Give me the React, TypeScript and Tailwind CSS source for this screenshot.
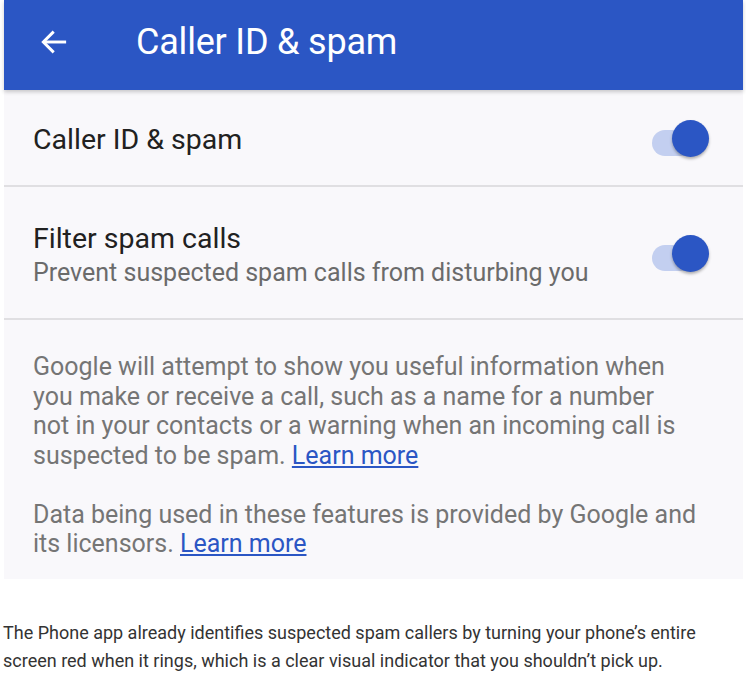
// App.tsx
const Toggle = () => (
  <div className="relative w-[60px] h-[40px] shrink-0">
    <div className="absolute left-[2px] top-[12px] w-[42px] h-[26px] rounded-full bg-[#c3cff0]" />
    <div className="absolute left-[22px] top-[2px] w-[37px] h-[37px] rounded-full bg-[#2b56c4] shadow-[0_2px_3px_rgba(0,0,0,0.3)]" />
  </div>
);

const App = () => {
  return (
    <div className="w-[746px] h-[696px] bg-white" style={{ fontFamily: "Roboto, 'Liberation Sans', sans-serif" }}>
      {/* screenshot card */}
      <div className="mx-[4px] w-[739px] bg-[#f9f8fb]">
        {/* app bar */}
        <div className="h-[90px] pb-[6px] bg-[#2b56c4] flex items-center shadow-[0_2px_4px_rgba(0,0,0,0.2)]">
          <svg width="32" height="32" viewBox="0 0 24 24" className="ml-[34px]" fill="none" stroke="white" strokeWidth="2.2" strokeLinecap="square">
            <path d="M20 12H5" />
            <path d="M11 5l-7 7 7 7" />
          </svg>
          <span className="ml-[66px] text-white text-[36px] tracking-[-0.2px]">Caller ID &amp; spam</span>
        </div>

        {/* row 1 */}
        <div className="h-[97px] pt-[6px] flex items-center justify-between pl-[29px] pr-[33px] border-b-2 border-[#e0dfe2]">
          <span className="text-[28.5px] text-[#212121]">Caller ID &amp; spam</span>
          <div className="-mt-[6px]">
            <Toggle />
          </div>
        </div>

        {/* row 2 */}
        <div className="h-[133px] pt-[6px] flex items-center justify-between pl-[29px] pr-[33px] border-b-2 border-[#e0dfe2]">
          <div className="flex flex-col">
            <span className="text-[28.5px] leading-[34px] text-[#212121]">Filter spam calls</span>
            <span className="text-[25px] leading-[34px] text-[#6b6b6b]">Prevent suspected spam calls from disturbing you</span>
          </div>
          <div className="-mt-[6px]">
            <Toggle />
          </div>
        </div>

        {/* description */}
        <div className="pl-[29px] pr-[10px] pt-[32px] pb-[20px] text-[25px] leading-[29.5px] text-[#757575] whitespace-nowrap">
          <p>
            Google will attempt to show you useful information when
            <br />
            you make or receive a call, such as a name for a number
            <br />
            not in your contacts or a warning when an incoming call is
            <br />
            suspected to be spam. <a className="text-[#2b56c4] underline">Learn more</a>
          </p>
          <p className="mt-[29.5px]">
            Data being used in these features is provided by Google and
            <br />
            its licensors. <a className="text-[#2b56c4] underline">Learn more</a>
          </p>
        </div>
      </div>

      {/* caption */}
      <p className="mt-[40px] pl-[3px] pr-[30px] text-[18px] leading-[28px] text-[#333333]">
        The Phone app already identifies suspected spam callers by turning your phone’s entire screen red when it rings, which is a clear visual indicator that you shouldn’t pick up.
      </p>
    </div>
  );
};

export default App;
